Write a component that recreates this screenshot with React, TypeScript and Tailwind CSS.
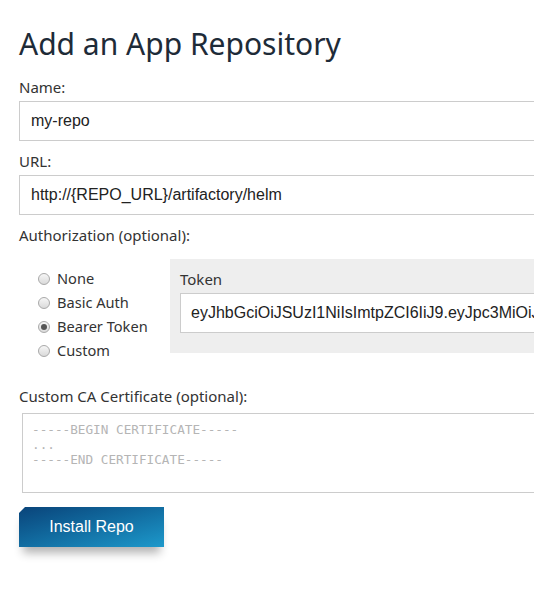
import { useState } from "react";

const labelFont = { fontFamily: '"Noto Sans", "Open Sans", sans-serif' };

export default function App() {
  const [auth, setAuth] = useState("bearer");

  const options = [
    { id: "none", label: "None" },
    { id: "basic", label: "Basic Auth" },
    { id: "bearer", label: "Bearer Token" },
    { id: "custom", label: "Custom" },
  ];

  return (
    <div className="w-[534px] h-[595px] overflow-hidden bg-white">
      <div className="w-[560px] pl-[19px] pt-[22px]">
        {/* Title */}
        <h1 className="text-[30px] leading-[44px] text-[#1e2b38] font-['Noto_Sans',sans-serif]">
          Add an App Repository
        </h1>

        {/* Name */}
        <label className="block mt-[11px] text-[15px] leading-[20px] text-[#333]" style={labelFont}>
          Name:
        </label>
        <input
          className="block mt-[4px] w-[530px] h-[40px] border border-[#cccccc] px-[11px] text-[16px] text-[#222] font-['Liberation_Sans',Arial,sans-serif] outline-none"
          defaultValue="my-repo"
        />

        {/* URL */}
        <label className="block mt-[10px] text-[15px] leading-[20px] text-[#333]" style={labelFont}>
          URL:
        </label>
        <input
          className="block mt-[4px] w-[530px] h-[40px] border border-[#cccccc] px-[11px] text-[16px] text-[#222] font-['Liberation_Sans',Arial,sans-serif] outline-none"
          defaultValue="http://{REPO_URL}/artifactory/helm"
        />

        {/* Authorization */}
        <label className="block mt-[10px] text-[15px] leading-[20px] text-[#333]" style={labelFont}>
          Authorization (optional):
        </label>
        <div className="flex items-start mt-[14px]">
          <div className="w-[151px] shrink-0 pt-[8px] pl-[19px]">
            {options.map((o) => (
              <div
                key={o.id}
                className="flex items-center h-[24px] cursor-pointer whitespace-nowrap"
                onClick={() => setAuth(o.id)}
              >
                <span className="w-[12px] h-[12px] rounded-full border border-[#a9a9a9] bg-linear-to-b from-[#f6f6f6] to-[#dadada] flex items-center justify-center mr-[7px]">
                  {auth === o.id && <span className="w-[6px] h-[6px] rounded-full bg-[#555]" />}
                </span>
                <span className="text-[14.6px] text-[#333]" style={labelFont}>
                  {o.label}
                </span>
              </div>
            ))}
          </div>
          <div className="flex-1 min-w-0 bg-[#eeeeee] h-[94px] pl-[10px] pt-[10px]">
            <div className="text-[15px] leading-[20px] text-[#333]" style={labelFont}>
              Token
            </div>
            <input
              className="block mt-[4px] w-[400px] h-[40px] border border-[#cccccc] bg-white px-[10px] text-[16px] text-[#222] font-['Liberation_Sans',Arial,sans-serif] outline-none"
              defaultValue="eyJhbGciOiJSUzI1NiIsImtpZCI6IiJ9.eyJpc3MiOiJrdWJlcm5ldGVzL3NlcnZpY2VhY2NvdW50In0"
            />
          </div>
        </div>

        {/* CA cert */}
        <label className="block mt-[23px] text-[15px] leading-[20px] text-[#333]" style={labelFont}>
          Custom CA Certificate (optional):
        </label>
        <textarea
          className="block mt-[7px] ml-[3px] w-[530px] h-[80px] border border-[#cccccc] px-[9px] py-[8px] text-[12.7px] leading-[15px] resize-none outline-none placeholder:text-[#b5b5b5] font-['DejaVu_Sans_Mono',monospace]"
          placeholder={"-----BEGIN CERTIFICATE-----\n...\n-----END CERTIFICATE-----"}
        />

        {/* Submit */}
        <div className="mt-[14px] w-fit shadow-[0_10px_10px_-4px_rgba(0,0,0,0.3)]">
          <button className="block w-[145px] h-[40px] text-white text-[16px] bg-linear-to-br from-[#0a447a] to-[#1d99cb] [clip-path:polygon(6px_0,100%_0,100%_100%,0_100%,0_6px)] font-['Liberation_Sans',Arial,sans-serif]">
            Install Repo
          </button>
        </div>
      </div>
    </div>
  );
}
